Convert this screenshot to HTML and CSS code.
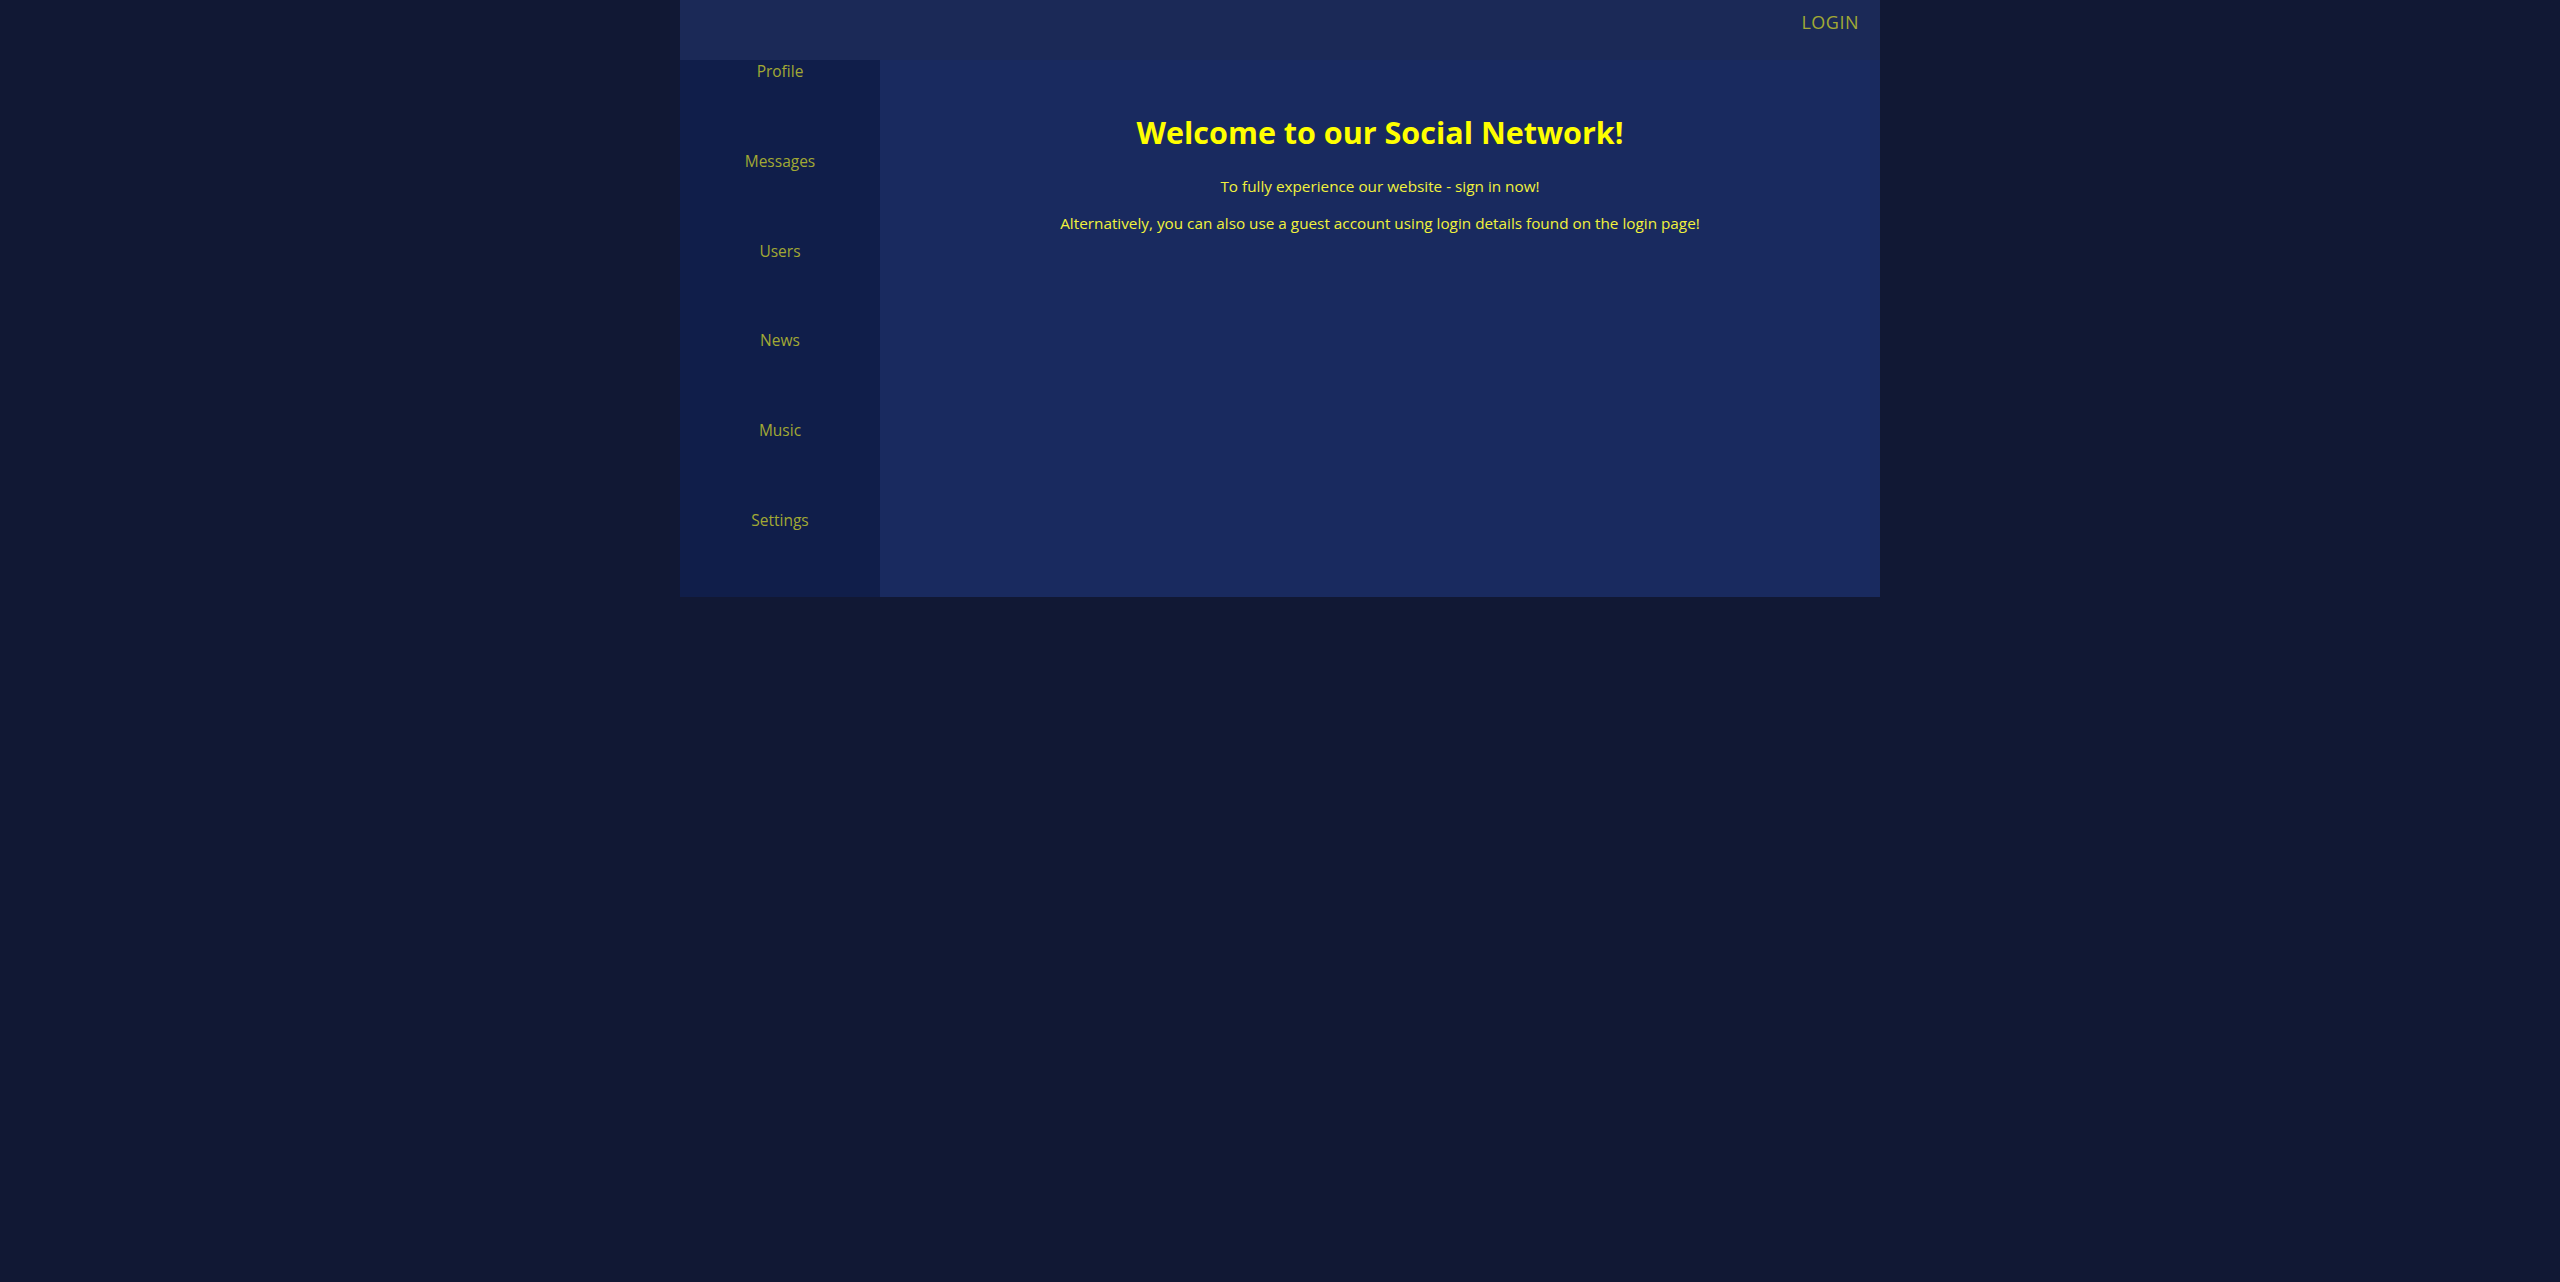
FILE: index.html
```html
<!DOCTYPE html>
<html lang="en">
<head>
<meta charset="utf-8">
<title>Social Network</title>
<link rel="stylesheet" href="styles.css">
</head>
<body>
<div class="app">
  <header class="header">
    <a class="login" href="#">LOGIN</a>
  </header>
  <div class="body">
    <nav class="nav">
      <a class="nav-item" href="#">Profile</a>
      <a class="nav-item" href="#">Messages</a>
      <a class="nav-item" href="#">Users</a>
      <a class="nav-item" href="#">News</a>
      <a class="nav-item" href="#">Music</a>
      <a class="nav-item" href="#">Settings</a>
    </nav>
    <main class="main">
      <h1 class="title">Welcome to our Social Network!</h1>
      <p class="text">To fully experience our website - sign in now!</p>
      <p class="text">Alternatively, you can also use a guest account using login details found on the login page!</p>
    </main>
  </div>
</div>
</body>
</html>
```
FILE: styles.css
```css
html, body {
  margin: 0;
  padding: 0;
  background: #111834;
  font-family: "Segoe UI", "Open Sans", "Noto Sans", sans-serif;
}
.app {
  width: 1200px;
  margin: 0 auto;
}
.header {
  height: 60px;
  box-sizing: border-box;
  background: #1b2957;
  display: flex;
  justify-content: flex-end;
  align-items: flex-start;
  padding: 10px 21px 0 0;
}
.login {
  color: #a2a934;
  text-decoration: none;
  font-size: 18px;
  letter-spacing: 0.5px;
  line-height: 24px;
}
.body {
  display: flex;
  height: 537px;
}
.nav {
  width: 200px;
  background: #101e4a;
  display: flex;
  flex-direction: column;
  overflow: hidden;
}
.nav-item {
  height: 89.8px;
  box-sizing: border-box;
  text-align: center;
  color: #a2a934;
  text-decoration: none;
  font-size: 15.5px;
  line-height: 22px;
  flex: none;
}
.main {
  flex: 1;
  background: #192a5f;
  padding-top: 50px;
  text-align: center;
}
.title {
  margin: 0 0 20.5px;
  font-size: 30.5px;
  line-height: 44px;
  font-weight: 700;
  color: #ffff00;
}
.text {
  margin: 0 0 15px;
  font-size: 15.3px;
  line-height: 22px;
  color: #f2f23c;
}
```
